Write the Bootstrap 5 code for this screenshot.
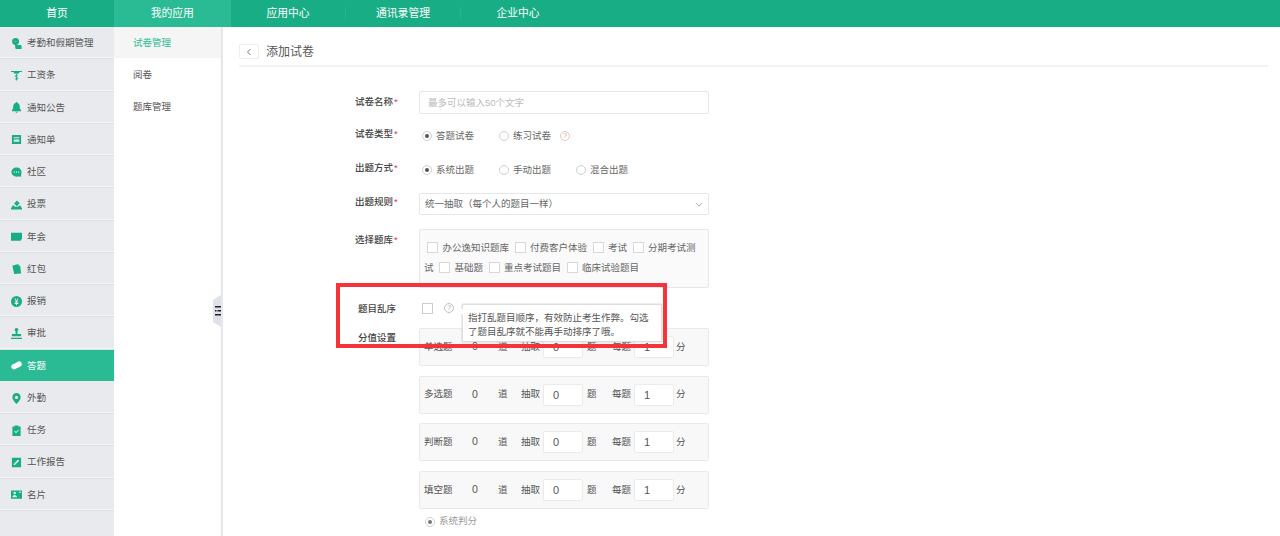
<!DOCTYPE html>
<html lang="zh-CN">
<head>
<meta charset="utf-8">
<title>添加试卷</title>
<link rel="stylesheet" href="https://cdn.jsdelivr.net/npm/bootstrap@5.3.0/dist/css/bootstrap.min.css">
<style>
html,body{height:536px;overflow:hidden}
body{font-family:"Liberation Sans","Noto Sans CJK SC",sans-serif;font-size:9.5px;color:#555;background:#fff;position:relative}
.topbar{height:27px;background:#19ad86}
.topbar a{width:115px;height:27px;line-height:27px;text-align:center;color:#fff;font-size:10.8px;text-decoration:none;position:relative}
.topbar a:first-child{width:114px}
.topbar a.on{background:#2abb94;width:116.5px}
.topbar a.split::after{content:"";position:absolute;right:0;top:7px;height:13px;width:1px;background:rgba(255,255,255,.08)}
.shell{height:509px}
.side-a{width:114px;background:#e8eaed;flex:none}
.side-a a{height:32.28px;display:flex;align-items:center;padding:1px 0 0 11px;color:#555;text-decoration:none;border-bottom:1px solid #dcdfe3;box-shadow:inset 0 -1px 0 #f4f5f6}
.side-a a.on{background:#2abb94;color:#fff;border-color:#e8eaed;box-shadow:none}
.side-a svg{width:11px;height:11px;margin-right:5px;flex:none;fill:#19ad86}
.side-a a.on svg{fill:#fff}
.side-b{width:109px;flex:none;border-right:2px solid #e6e7ea;position:relative;background:#fff}
.side-b a{display:block;height:31px;line-height:31px;margin-bottom:1.1px;padding-left:19px;color:#555;text-decoration:none}
.side-b a.on{background:#f5f5f5;color:#2abb94}
.handle{position:absolute;right:0;top:268px;width:8px;height:32px}
.main-pane{padding:17px 12px 0 16px;position:relative}
.pg-head{height:23px;border-bottom:2px solid #f3f3f3;padding-bottom:6px;font-size:12px;color:#555}
.back-btn{width:20px;height:15px;border:1px solid #eee;border-radius:2px;margin-right:7px;background:#fff}
.pg-form{margin:24px 0 0 116px;width:354px}
.frow{display:flex}
.flabel{width:64px;flex:none;color:#444;font-weight:500;line-height:19px}
.flabel i{color:#e33;font-style:normal;margin-left:1px}
.flabel.plain{padding-left:3px}
.fbody{width:290px;font-size:9.5px}
.r-name{height:23px;margin-bottom:11px}
.r-name .flabel{line-height:21px}
.r-radio{height:22px;margin-bottom:12px;align-items:center}
.r-radio .flabel{margin-top:-5px}
.r-sel{height:22px;margin-bottom:14px}
.r-sel .flabel{line-height:18px}
.r-box{height:59px;margin-bottom:9px}
.r-box .flabel{line-height:21px}
.r-mix{height:22px;margin-bottom:9px;align-items:center}
.pg-form .form-control,.pg-form .form-select{height:100%;min-height:0;font-size:9.5px;padding:0 8px;border:1px solid #e6e6e6;border-radius:2px;color:#666;box-shadow:none}
.pg-form .form-control::placeholder{color:#bbb}
.pg-form .form-select{padding-left:5px;background-image:url("data:image/svg+xml,%3csvg xmlns='http://www.w3.org/2000/svg' viewBox='0 0 10 6'%3e%3cpath fill='none' stroke='%23999' d='M1 1l4 4 4-4'/%3e%3c/svg%3e");background-size:8px 5px;background-position:right 5px center}
.opt{display:inline-flex;align-items:center;color:#666;width:77px}
.opt b{width:10px;height:10px;border:1px solid #cfcfcf;border-radius:50%;margin:0 4px 0 3px;flex:none;position:relative;background:#fff}
.opt b.sel::after{content:"";position:absolute;left:2px;top:2px;width:4px;height:4px;border-radius:50%;background:#555}
.opt.last{width:auto}
.q-icon{display:inline-block;width:10px;height:10px;border:1px solid #e8c8b8;border-radius:50%;font-size:7.5px;line-height:8px;text-align:center;color:#d2ac9a;margin-left:9px;font-style:normal}
.q-icon.gray{border-color:#c8bfba;color:#b5aaa5;margin-left:11px}
.bankbox{height:59px;border:1px solid #e6e6e6;border-radius:2px;background:#fafafa;padding:8px 4px 0 4px;line-height:20px;color:#666}
.bcheck{display:inline-block;width:11px;height:11px;border:1px solid #d8d8d8;background:#fff;margin:0 4.5px 0 5.5px;vertical-align:-2px}
.bcheck.first{margin-left:3px}
.solo{display:block;width:11px;height:11px;border:1px solid #ccc;background:#fff;margin-left:3px}
.r-score{align-items:flex-start}
.score-list{width:290px}
.score-card{height:38px;margin-bottom:9.6px;border:1px solid #e9e9e9;border-radius:2px;background:#f8f8f8;font-size:9.5px;color:#555;padding-left:4px}
.score-card span{flex:none}
.w48{width:48px}.w26{width:26px;font-size:10.5px}.w23{width:23px}.w22{width:22px}.w25{width:25px}
.gap-l{margin-left:4px}.gap-s{margin-left:2px}
.pg-form .score-card .form-control{width:40px;height:22px;flex:none;font-size:11px;padding:0 0 0 9px;border-color:#ebebeb;background:#fff;color:#555}
.judge{margin:-4px 0 0 6px;color:#999;display:flex;align-items:center}
.judge b{width:10px;height:10px;border:1px solid #cfcfcf;border-radius:50%;margin-right:4px;position:relative;background:#fff}
.judge b::after{content:"";position:absolute;left:2px;top:2px;width:4px;height:4px;border-radius:50%;background:#777}
.redmark{position:absolute;left:336px;top:283px;width:331px;height:65px;border:4px solid #f5333a;pointer-events:none;z-index:3}
.tipbox{position:absolute;left:462px;top:304px;width:200px;height:38px;background:#fff;border:1px solid #ddd;box-shadow:0 0 2px rgba(0,0,0,.2);padding:6px 5px 0;line-height:14px;color:#555;z-index:2}
.tipbox::before{content:"";position:absolute;left:-6px;top:4px;border-style:solid;border-width:0 6px 6px 0;border-color:transparent #fff transparent transparent}
</style>
</head>
<body>
<nav class="topbar d-flex">
  <a href="#">首页</a><a href="#" class="on">我的应用</a><a href="#" class="split">应用中心</a><a href="#" class="split">通讯录管理</a><a href="#">企业中心</a>
</nav>
<div class="shell d-flex">
  <aside class="side-a">
    <a href="#"><svg viewBox="0 0 12 12"><circle cx="5" cy="3.800" r="3.800"/><path d="M4 6h2.500v1.500H10c1 0 1.500.5 1.500 1.500v3H5z"/><circle cx="5" cy="3.800" r="1.200" fill="#7a9"/></svg>考勤和假期管理</a>
    <a href="#"><svg viewBox="0 0 12 12"><path d="M0 1h12v1.300H9.500L8 4H4L2.500 2.300H0z"/><path d="M7.800 6.200C7 5.500 4.800 5.500 4.600 6.700 4.400 8 7.500 7.800 7.500 9.200 7.500 10.400 5 10.500 4.200 9.600M6 4.500V11.500" fill="none" stroke="#19ad86"/></svg>工资条</a>
    <a href="#"><svg viewBox="0 0 12 12"><path d="M6 0a1 1 0 0 1 1 1c2 .6 2.600 2.500 2.600 4.500 0 2 .9 3 1.400 3.500v1H1V9c.5-.5 1.400-1.500 1.400-3.500S3 1.600 5 1a1 1 0 0 1 1-1zM4.500 10.500h3L6 12z"/></svg>通知公告</a>
    <a href="#"><svg viewBox="0 0 12 12"><path fill-rule="evenodd" d="M1 1h10v10H1zM3 3.500v1h6v-1zM3 6v2.500h6V6z"/></svg>通知单</a>
    <a href="#"><svg viewBox="0 0 12 12"><path d="M6 .5c3 0 5.500 2 5.500 5 0 1.500-.5 2.500-.5 5.500-1.500-.8-3-.5-5-.5-3 0-5.500-2-5.500-5s2.500-5 5.500-5z"/><path d="M3 5h1.200v1.200H3zM5.400 5h1.200v1.200H5.400zM7.800 5H9v1.200H7.800z" fill="#e8eaed"/></svg>社区</a>
    <a href="#"><svg viewBox="0 0 12 12"><path d="M3.500 4.500 6.500 1.500l3 3-3 3H6L3.500 5zM0 10l2-3h1l1.500 1.500h3L9 7h1l2 3v1.500H0z"/></svg>投票</a>
    <a href="#"><svg viewBox="0 0 12 12"><path d="M0 2h12v6L10.500 10.500H0z"/></svg>年会</a>
    <a href="#"><svg viewBox="0 0 12 12"><path d="M1.500 3 8 1l.5 2H10l1 8.500-7.500.5z"/></svg>红包</a>
    <a href="#"><svg viewBox="0 0 12 12"><path fill-rule="evenodd" d="M6 0a6 6 0 1 1 0 12A6 6 0 0 1 6 0zM3.800 2.800 5.500 6H4v1h1.500v.7H4v1h1.500V10h1V8.700H8v-1H6.500V7H8V6H6.500l1.700-3.200h-1.100L6 5 4.900 2.800z"/></svg>报销</a>
    <a href="#"><svg viewBox="0 0 12 12"><path d="M6 0a2 2 0 0 1 1 3.700V6.500h4V9H1V6.500h4V3.700A2 2 0 0 1 6 0zM0 10.500h12V12H0z"/></svg>审批</a>
    <a href="#" class="on"><svg viewBox="0 0 12 12"><ellipse cx="4" cy="7" rx="3.800" ry="3" transform="rotate(-20 4 7)"/><ellipse cx="8" cy="4.800" rx="3.900" ry="3" transform="rotate(-25 8 4.800)"/></svg>答题</a>
    <a href="#"><svg viewBox="0 0 12 12"><path fill-rule="evenodd" d="M6 0c2.800 0 4.500 2 4.500 4.500C10.500 7.500 7.500 10 6 12 4.500 10 1.500 7.500 1.500 4.500 1.500 2 3.200 0 6 0zm0 3a1.800 1.800 0 1 0 0 3.600A1.800 1.800 0 0 0 6 3z"/></svg>外勤</a>
    <a href="#"><svg viewBox="0 0 12 12"><path fill-rule="evenodd" d="M1.500 1.500h2.500V.5h4v1h2.500V12h-9zM3.500 7l2 2 3.200-3.500-.7-.6L5.500 7.700 4.200 6.300z"/></svg>任务</a>
    <a href="#"><svg viewBox="0 0 12 12"><path fill-rule="evenodd" d="M1 .8h10v10.400H1zM3 8.800h1.200L9 4l-1.200-1.200L3 7.600z"/></svg>工作报告</a>
    <a href="#"><svg viewBox="0 0 12 12"><path fill-rule="evenodd" d="M0 1.500h12v9H0zM4 3a1.400 1.400 0 1 0 0 2.800A1.400 1.400 0 0 0 4 3zM1.500 9h5c0-1.500-1-2.500-2.500-2.500S1.500 7.500 1.500 9zM8.500 3v1H11V3z"/></svg>名片</a>
  </aside>
  <aside class="side-b">
    <a href="#" class="on">试卷管理</a>
    <a href="#">阅卷</a>
    <a href="#">题库管理</a>
    <svg class="handle" viewBox="0 0 8 32">
      <path d="M8 0 0 5V27L8 32z" fill="#dfe2e8"/>
      <path d="M2 11h6v1.500H2zM2 15h1.500v1.500H2zM4.500 15H8v1.500H4.500zM2 19h6v1.500H2z" fill="#222"/>
    </svg>
  </aside>
  <main class="main-pane flex-grow-1">
    <div class="pg-head d-flex align-items-center">
      <button type="button" class="back-btn d-flex align-items-center justify-content-center p-0" aria-label="返回"><svg width="6" height="8" viewBox="0 0 6 8"><path d="M4.500 1 1.500 4l3 3" fill="none" stroke="#777" stroke-width="1"/></svg></button>
      <span>添加试卷</span>
    </div>
    <form class="pg-form">
      <div class="frow r-name"><div class="flabel">试卷名称<i>*</i></div><div class="fbody"><input class="form-control" placeholder="最多可以输入50个文字"></div></div>
      <div class="frow r-radio"><div class="flabel">试卷类型<i>*</i></div><div class="fbody d-flex align-items-center"><span class="opt"><b class="sel"></b>答题试卷</span><span class="opt last"><b></b>练习试卷</span><i class="q-icon">?</i></div></div>
      <div class="frow r-radio"><div class="flabel">出题方式<i>*</i></div><div class="fbody d-flex align-items-center"><span class="opt"><b class="sel"></b>系统出题</span><span class="opt"><b></b>手动出题</span><span class="opt last"><b></b>混合出题</span></div></div>
      <div class="frow r-sel"><div class="flabel">出题规则<i>*</i></div><div class="fbody"><select class="form-select"><option>统一抽取（每个人的题目一样）</option></select></div></div>
      <div class="frow r-box"><div class="flabel">选择题库<i>*</i></div><div class="fbody"><div class="bankbox"><span class="bcheck first"></span><span>办公逸知识题库</span><span class="bcheck"></span><span>付费客户体验</span><span class="bcheck"></span><span>考试</span><span class="bcheck"></span><span>分期考试测</span><span>试</span><span class="bcheck"></span><span>基础题</span><span class="bcheck"></span><span>重点考试题目</span><span class="bcheck"></span><span>临床试验题目</span></div></div></div>
      <div class="frow r-mix"><div class="flabel plain">题目乱序</div><div class="fbody d-flex align-items-center"><span class="solo"></span><i class="q-icon gray">?</i></div></div>
      <div class="frow r-score"><div class="flabel plain">分值设置</div>
        <div class="score-list">
          <div class="score-card d-flex align-items-center"><span class="w48">单选题</span><span class="w26">0</span><span class="w23">道</span><span class="w22">抽取</span><input class="form-control" value="0"><span class="w25 gap-l">题</span><span class="w22">每题</span><input class="form-control" value="1"><span class="gap-s">分</span></div>
          <div class="score-card d-flex align-items-center"><span class="w48">多选题</span><span class="w26">0</span><span class="w23">道</span><span class="w22">抽取</span><input class="form-control" value="0"><span class="w25 gap-l">题</span><span class="w22">每题</span><input class="form-control" value="1"><span class="gap-s">分</span></div>
          <div class="score-card d-flex align-items-center"><span class="w48">判断题</span><span class="w26">0</span><span class="w23">道</span><span class="w22">抽取</span><input class="form-control" value="0"><span class="w25 gap-l">题</span><span class="w22">每题</span><input class="form-control" value="1"><span class="gap-s">分</span></div>
          <div class="score-card d-flex align-items-center"><span class="w48">填空题</span><span class="w26">0</span><span class="w23">道</span><span class="w22">抽取</span><input class="form-control" value="0"><span class="w25 gap-l">题</span><span class="w22">每题</span><input class="form-control" value="1"><span class="gap-s">分</span></div>
          <div class="judge"><b></b>系统判分</div>
        </div>
      </div>
    </form>
  </main>
</div>
<div class="tipbox">指打乱题目顺序，有效防止考生作弊。勾选了题目乱序就不能再手动排序了哦。</div>
<div class="redmark"></div>
<script src="https://cdn.jsdelivr.net/npm/bootstrap@5.3.0/dist/js/bootstrap.bundle.min.js"></script>
</body>
</html>
